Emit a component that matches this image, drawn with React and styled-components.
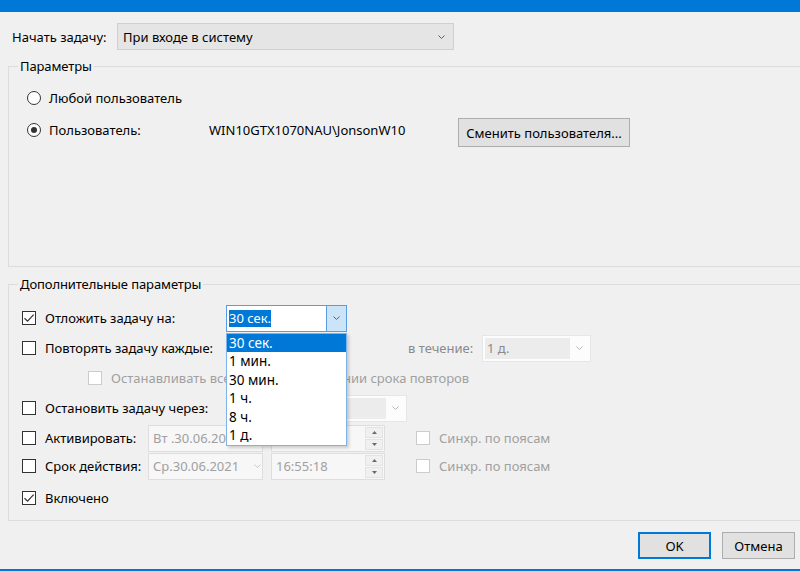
import React from 'react';
import styled, { createGlobalStyle } from 'styled-components';

const GlobalStyle = createGlobalStyle`
  html, body {
    margin: 0;
    padding: 0;
    background: #f0f0f0;
  }
  body {
    font-family: "Noto Sans", "Liberation Sans", sans-serif;
    font-size: 13px;
    color: #000;
  }
  #root {
    width: 800px;
    height: 571px;
    overflow: hidden;
  }
`;

const Chevron = ({ color = '#606060' }) => (
  <svg width="7" height="4" viewBox="0 0 7 4">
    <path d="M0.5 0.5 L3.5 3.5 L6.5 0.5" fill="none" stroke={color} strokeWidth="1" />
  </svg>
);

const CheckMark = () => (
  <svg width="12" height="12" viewBox="0 0 12 12">
    <path d="M1.5 6.2 L4.6 9.2 L10.6 2.6" fill="none" stroke="#333" strokeWidth="1.2" />
  </svg>
);

function Checkbox({ checked, disabled }) {
  return <Box $disabled={disabled}>{checked && <CheckMark />}</Box>;
}

function Combo({ width, value }) {
  return (
    <ComboBox $w={width}>
      <ComboInner>{value}</ComboInner>
      <ComboArrow><Chevron color="#b5b5b5" /></ComboArrow>
    </ComboBox>
  );
}

function Spin() {
  return (
    <SpinCol>
      <SpinBtn>
        <svg width="5" height="3" viewBox="0 0 5 3"><path d="M0 3 L2.5 0 L5 3 Z" fill="#6a6a6a" /></svg>
      </SpinBtn>
      <SpinBtn>
        <svg width="5" height="3" viewBox="0 0 5 3"><path d="M0 0 L2.5 3 L5 0 Z" fill="#6a6a6a" /></svg>
      </SpinBtn>
    </SpinCol>
  );
}

const delays = ['30 сек.', '1 мин.', '30 мин.', '1 ч.', '8 ч.', '1 д.'];

export default function App() {
  return (
    <Window>
      <GlobalStyle />
      <TitleBar />
      <Body>
        <TopRow>
          <TopLabel>Начать задачу:</TopLabel>
          <Select>
            <span>При входе в систему</span>
            <Chevron />
          </Select>
        </TopRow>

        <Group $h={209}>
          <Legend>Параметры</Legend>
          <RadioList>
            <RadioRow>
              <RadioItem>
                <Radio />
                Любой пользователь
              </RadioItem>
            </RadioRow>
            <RadioRow>
              <RadioItem $w={182}>
                <Radio $checked />
                Пользователь:
              </RadioItem>
              <UserName>WIN10GTX1070NAU\JonsonW10</UserName>
              <Button $w={172} $h={29}>Сменить пользователя...</Button>
            </RadioRow>
          </RadioList>
        </Group>

        <Group $h={245} $gap={9}>
          <Legend>Дополнительные параметры</Legend>
          <Rows>
            <Row>
              <CheckItem $w={204}>
                <Checkbox checked />
                Отложить задачу на:
              </CheckItem>
              <OpenCombo>
                <OpenField>
                  <Selected>30 сек.</Selected>
                </OpenField>
                <OpenArrow><Chevron /></OpenArrow>
                <DropList>
                  {delays.map((d, i) => (
                    <DropItem key={d} $active={i === 0}>{d}</DropItem>
                  ))}
                </DropList>
              </OpenCombo>
            </Row>

            <Row>
              <CheckItem $w={204}>
                <Checkbox />
                Повторять задачу каждые:
              </CheckItem>
              <Combo width={121} value="" />
              <DisabledText $w={74} $ml={61}>в течение:</DisabledText>
              <Combo width={109} value="1 д." />
            </Row>

            <Row $indent={66}>
              <CheckItem $disabled>
                <Checkbox disabled />
                Останавливать все задачи по истечении срока повторов
              </CheckItem>
            </Row>

            <Row>
              <CheckItem $w={204}>
                <Checkbox />
                Остановить задачу через:
              </CheckItem>
              <Combo width={181} value="" />
            </Row>

            <Row>
              <CheckItem $w={126}>
                <Checkbox />
                Активировать:
              </CheckItem>
              <Field $w={115}>
                <span>Вт .30.06.2020</span>
                <Chevron color="#c8c8c8" />
              </Field>
              <Field $w={114} $ml={8}>
                <span>16:55:18</span>
                <Spin />
              </Field>
              <SyncItem>
                <Checkbox disabled />
                Синхр. по поясам
              </SyncItem>
            </Row>

            <Row $top={-2}>
              <CheckItem $w={126}>
                <Checkbox />
                Срок действия:
              </CheckItem>
              <Field $w={115}>
                <span>Ср.30.06.2021</span>
                <Chevron color="#c8c8c8" />
              </Field>
              <Field $w={114} $ml={8}>
                <span>16:55:18</span>
                <Spin />
              </Field>
              <SyncItem>
                <Checkbox disabled />
                Синхр. по поясам
              </SyncItem>
            </Row>

            <Row $top={2}>
              <CheckItem>
                <Checkbox checked />
                Включено
              </CheckItem>
            </Row>
          </Rows>
        </Group>

        <Buttons>
          <Button $w={73} $h={27} $default>OK</Button>
          <Button $w={73} $h={27}>Отмена</Button>
        </Buttons>
      </Body>
      <BottomLine />
    </Window>
  );
}

const Window = styled.div`
  display: flex;
  flex-direction: column;
  width: 800px;
  height: 571px;
  overflow: hidden;
`;

const TitleBar = styled.div`
  height: 12px;
  background: #0078d7;
  flex-shrink: 0;
`;

const Body = styled.div`
  flex: 1;
  display: flex;
  flex-direction: column;
  padding: 0 0 0 8px;
`;

const BottomLine = styled.div`
  height: 2px;
  background: #0078d7;
  flex-shrink: 0;
`;

const TopRow = styled.div`
  display: flex;
  align-items: center;
  margin-top: 11px;
  height: 27px;
`;

const TopLabel = styled.span`
  width: 109px;
  padding-left: 4px;
  box-sizing: border-box;
`;

const Select = styled.div`
  width: 337px;
  height: 27px;
  box-sizing: border-box;
  background: #e5e5e5;
  border: 1px solid #d0d0d0;
  display: flex;
  align-items: center;
  justify-content: space-between;
  padding: 0 8px 0 5px;
`;

const Group = styled.fieldset`
  margin: ${p => p.$gap || 8}px -12px 0 0;
  padding: 0 0 0 13px;
  border: 1px solid #dcdcdc;
  height: ${p => p.$h}px;
  box-sizing: border-box;
  min-width: 0;
`;

const Legend = styled.legend`
  padding: 0 2px;
  margin-left: -4px;
  line-height: 16px;
  color: #000;
  letter-spacing: -0.1px;
`;

const RadioList = styled.div`
  display: flex;
  flex-direction: column;
  gap: 12px;
  padding: 14px 0 0 5px;
`;

const RadioRow = styled.div`
  display: flex;
  align-items: flex-start;
  height: 20px;
`;

const RadioItem = styled.label`
  display: flex;
  align-items: center;
  gap: 8px;
  height: 20px;
  width: ${p => (p.$w ? `${p.$w}px` : 'auto')};
`;

const Radio = styled.span`
  width: 14px;
  height: 14px;
  box-sizing: border-box;
  border: 1px solid #333;
  border-radius: 50%;
  background: #fff;
  display: flex;
  align-items: center;
  justify-content: center;
  &::after {
    content: '';
    display: ${p => (p.$checked ? 'block' : 'none')};
    width: 6px;
    height: 6px;
    border-radius: 50%;
    background: #333;
  }
`;

const UserName = styled.span`
  width: 249px;
  line-height: 20px;
`;

const Button = styled.button`
  width: ${p => p.$w}px;
  height: ${p => p.$h}px;
  margin-top: ${p => (p.$h === 29 ? -2 : 0)}px;
  box-sizing: border-box;
  background: #e1e1e1;
  border: ${p => (p.$default ? '2px solid #0078d7' : '1px solid #adadad')};
  font: inherit;
  color: #000;
  padding: 0;
`;

const Rows = styled.div`
  display: flex;
  flex-direction: column;
  gap: 2px;
  padding-top: 12px;
`;

const Row = styled.div`
  display: flex;
  align-items: center;
  height: 28px;
  padding-left: ${p => p.$indent || 0}px;
  margin-top: ${p => p.$top || 0}px;
`;

const CheckItem = styled.label`
  display: flex;
  align-items: center;
  gap: 9px;
  width: ${p => (p.$w ? `${p.$w}px` : 'auto')};
  flex-shrink: 0;
  color: ${p => (p.$disabled ? '#a0a0a0' : '#000')};
  white-space: nowrap;
`;

const Box = styled.span`
  width: 14px;
  height: 14px;
  box-sizing: border-box;
  border: 1px solid ${p => (p.$disabled ? '#cccccc' : '#333')};
  background: #fff;
  display: flex;
  align-items: center;
  justify-content: center;
  flex-shrink: 0;
`;

const ComboBox = styled.div`
  width: ${p => p.$w}px;
  height: 27px;
  box-sizing: border-box;
  background: #fcfcfc;
  border: 1px solid #e6e6e6;
  display: flex;
  align-items: stretch;
  padding: 2px;
  flex-shrink: 0;
`;

const ComboInner = styled.div`
  flex: 1;
  background: #ececec;
  color: #8a8a8a;
  display: flex;
  align-items: center;
  padding-left: 2px;
`;

const ComboArrow = styled.div`
  width: 18px;
  display: flex;
  align-items: center;
  justify-content: center;
`;

const DisabledText = styled.span`
  width: ${p => p.$w}px;
  margin-left: ${p => p.$ml}px;
  color: #8a8a8a;
  flex-shrink: 0;
`;

const OpenCombo = styled.div`
  position: relative;
  width: 121px;
  height: 27px;
  box-sizing: border-box;
  border: 1px solid #569de5;
  background: #fff;
  display: flex;
`;

const OpenField = styled.div`
  flex: 1;
  display: flex;
  align-items: center;
  padding-left: 2px;
`;

const Selected = styled.span`
  background: #0078d7;
  color: #fff;
  line-height: 17px;
`;

const OpenArrow = styled.div`
  width: 19px;
  background: #cce4f7;
  border-left: 1px solid #569de5;
  display: flex;
  align-items: center;
  justify-content: center;
`;

const DropList = styled.div`
  position: absolute;
  left: -1px;
  top: 27px;
  width: 121px;
  box-sizing: border-box;
  border: 1px solid #7eb4ea;
  background: #fff;
  box-shadow: 2px 2px 3px rgba(0, 0, 0, 0.18);
  z-index: 5;
`;

const DropItem = styled.div`
  height: 18.5px;
  line-height: 18.5px;
  padding-left: 2px;
  font-size: 13.5px;
  background: ${p => (p.$active ? '#0078d7' : '#fff')};
  color: ${p => (p.$active ? '#fff' : '#000')};
`;

const Field = styled.div`
  width: ${p => p.$w}px;
  margin-left: ${p => p.$ml || 0}px;
  height: 27px;
  box-sizing: border-box;
  border: 1px solid #dedede;
  background: #f7f7f7;
  color: #a0a0a0;
  display: flex;
  align-items: center;
  justify-content: space-between;
  padding: 0 1px 0 4px;
  flex-shrink: 0;
`;

const SpinCol = styled.div`
  display: flex;
  flex-direction: column;
  gap: 1px;
  height: 25px;
  justify-content: center;
`;

const SpinBtn = styled.div`
  width: 18px;
  height: 11px;
  box-sizing: border-box;
  border: 1px solid #e3e3e3;
  background: #f0f0f0;
  display: flex;
  align-items: center;
  justify-content: center;
`;

const SyncItem = styled.label`
  display: flex;
  align-items: center;
  gap: 9px;
  margin-left: 31px;
  color: #a0a0a0;
`;

const Buttons = styled.div`
  display: flex;
  justify-content: flex-end;
  gap: 11px;
  margin-top: 11px;
  padding-right: 5px;
`;
